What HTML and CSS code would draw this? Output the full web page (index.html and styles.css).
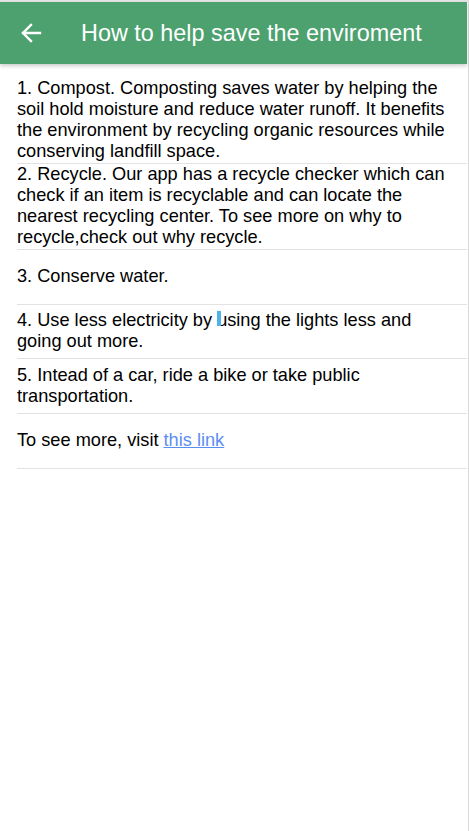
FILE: index.html
```html
<!DOCTYPE html>
<html lang="en">
<head>
    <meta charset="UTF-8">
    <meta name="viewport" content="width=device-width, initial-scale=1.0">
    <title>How to help save the enviroment</title>
    <link rel="stylesheet" href="styles.css">
</head>
<body>
    <div class="screen">
        <!-- Top bar -->
        <header class="toolbar">
            <svg class="back" width="22" height="22" viewBox="0 0 22 22">
                <path d="M20 11H3M11 3l-8 8 8 8" fill="none" stroke="#fff" stroke-width="2.4" stroke-linecap="square"/>
            </svg>
            <h1 class="title">How to help save the enviroment</h1>
        </header>

        <!-- Tips -->
        <div class="list">
            <div class="item item-long">1. Compost. Composting saves water by helping the soil hold moisture and reduce water runoff. It benefits the environment by recycling organic resources while conserving landfill space.</div>
            <div class="item item-long">2. Recycle. Our app has a recycle checker which can check if an item is recyclable and can locate the nearest recycling center. To see more on why to recycle,check out why recycle.</div>
            <div class="item"><span>3. Conserve water.</span></div>
            <div class="item"><span>4. Use less electricity by <span class="caret"></span>using the lights less and going out more.</span></div>
            <div class="item"><span>5. Intead of a car, ride a bike or take public transportation.</span></div>
            <div class="item"><span>To see more, visit <a class="link" href="#">this link</a></span></div>
        </div>
    </div>
</body>
</html>
```

FILE: styles.css
```css
body {
    margin: 0;
    font-family: "Liberation Sans", Arial, sans-serif;
    background: #fff;
}

.screen {
    width: 467px;
    min-height: 829px;
    border-top: 2px solid #e4e4e4;
    border-right: 1px solid #d9d9d9;
    padding-right: 1px;
}

/* Green top bar */
.toolbar {
    height: 62px;
    background-color: #4ca16f;
    display: flex;
    align-items: center;
    box-shadow: 0 2px 4px rgba(0, 0, 0, 0.2);
    position: relative;
}

.back {
    margin-left: 20px;
    flex-shrink: 0;
}

.title {
    margin: 0 0 0 39px;
    font-size: 23.4px;
    font-weight: normal;
    color: #fff;
}

/* List of tips */
.list {
    padding: 14px 0 0 17px;
}

.item {
    font-size: 18.2px;
    line-height: 21px;
    color: #000;
    padding: 0 16px 1px 0;
    border-bottom: 1px solid #e2e2e2;
}

.item:not(.item-long) {
    min-height: 52.7px;
    display: flex;
    align-items: center;
}

/* blue text cursor left in the screenshot */
.caret {
    position: relative;
    display: inline-block;
    width: 0;
}

.caret::before {
    content: "";
    position: absolute;
    left: 0;
    top: -15px;
    width: 4px;
    height: 15px;
    background-color: #4fb3e8;
}

.link {
    color: #5c8ef2;
}
```
